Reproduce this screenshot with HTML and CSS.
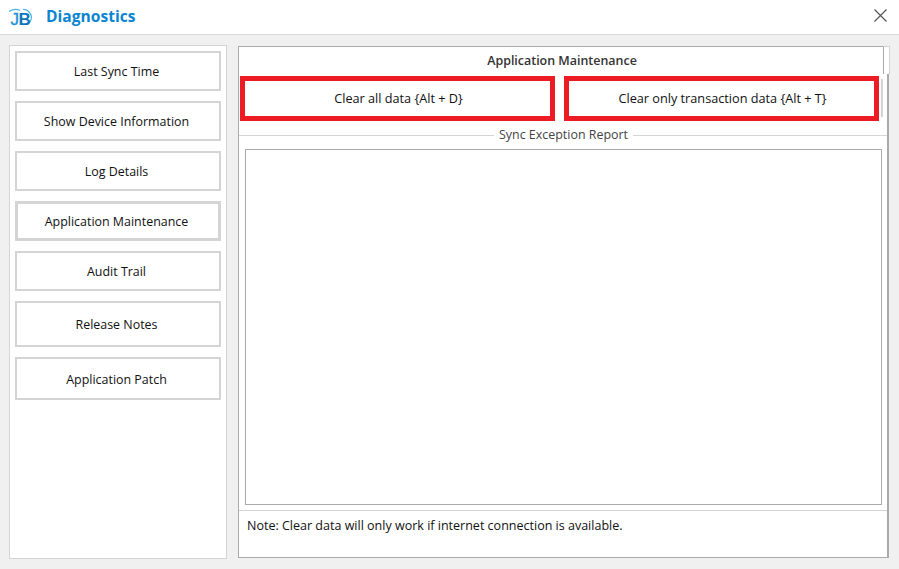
FILE: index.html
```html
<!DOCTYPE html>
<html lang="en">
<head>
<meta charset="utf-8">
<title>Diagnostics</title>
<link rel="stylesheet" href="styles.css">
</head>
<body>
<header class="titlebar">
  <svg class="logo" viewBox="0 0 26 20" width="26" height="20" aria-hidden="true">
    <path class="logo-swoosh" d="M1 3.500C5 1 9 1 12 2.500"/>
    <path class="logo-swoosh" d="M15 1.500C19 1 23 5 23.500 9C23.500 12 21.500 14.500 19.500 16"/>
    <text class="logo-j" x="2.500" y="17">J</text>
    <text class="logo-b" x="10.500" y="17">B</text>
  </svg>
  <h1 class="title">Diagnostics</h1>
  <button class="close" aria-label="Close">
    <svg viewBox="0 0 13 13" width="13" height="13" aria-hidden="true"><path d="M.5.5l12 12M12.500.5l-12 12"/></svg>
  </button>
</header>
<div class="content">
  <nav class="sidebar">
    <button class="nav-btn">Last Sync Time</button>
    <button class="nav-btn">Show Device Information</button>
    <button class="nav-btn">Log Details</button>
    <button class="nav-btn active">Application Maintenance</button>
    <button class="nav-btn">Audit Trail</button>
    <button class="nav-btn tall">Release Notes</button>
    <button class="nav-btn mid">Application Patch</button>
  </nav>
  <main class="panel">
    <h2 class="panel-title">Application Maintenance</h2>
    <div class="actions">
      <button class="action">Clear all data {Alt + D}</button>
      <button class="action last">Clear only transaction data {Alt + T}</button>
    </div>
    <fieldset class="report">
      <legend class="report-legend">Sync Exception Report</legend>
      <div class="report-box"></div>
    </fieldset>
    <p class="note">Note: Clear data will only work if internet connection is available.</p>
  </main>
</div>
</body>
</html>
```
FILE: styles.css
```css
* { box-sizing: border-box; }
html, body { height: 100%; }
body {
  margin: 0;
  height: 569px;
  overflow: hidden;
  background: #f0f0f0;
  color: #111;
  font-family: "Open Sans", "Noto Sans", sans-serif;
  font-size: 12.450px;
  display: flex;
  flex-direction: column;
}
.titlebar {
  height: 35px;
  flex: none;
  background: #fff;
  border-bottom: 1px solid #d9d9d9;
  display: flex;
  align-items: center;
  padding: 0 12px 0 8px;
}
.logo { flex: none; margin-top: 1px; }
.logo-swoosh { fill: none; stroke: #4db4e6; stroke-width: 1.200; }
.logo-j, .logo-b { font-family: "Liberation Sans", sans-serif; font-size: 17px; }
.logo-j { fill: #1c93d8; stroke: #1c93d8; stroke-width: .4; }
.logo-b { fill: #0f76bd; font-weight: 700; }
.title {
  margin: 0 0 2px 12px;
  font-size: 15.600px;
  font-weight: 700;
  color: #0a85d1;
  flex: 1;
}
.close {
  width: 13px;
  height: 13px;
  padding: 0;
  border: 0;
  background: none;
  display: flex;
  margin-bottom: 4px;
}
.close path { stroke: #555; stroke-width: 1.200; fill: none; }
.content {
  flex: 1;
  display: flex;
  gap: 11px;
  padding: 10px 10px 10px 9px;
  min-height: 0;
}
.sidebar {
  width: 218px;
  flex: none;
  background: #fff;
  border: 1px solid #d4d4d4;
  padding: 5px;
  display: flex;
  flex-direction: column;
  gap: 10px;
}
.nav-btn {
  height: 40px;
  flex: none;
  background: #fff;
  border: 2px solid #d4d4d4;
  font: inherit;
  color: #111;
  padding: 0 3px 0 0;
}
.nav-btn.active { border-width: 3px; }
.nav-btn.tall { height: 46px; }
.nav-btn.mid { height: 43px; padding-top: 1px; }
.panel {
  flex: 1;
  min-width: 0;
  background: #fff;
  border: 1px solid #aaa;
  border-right-width: 2px;
  margin-top: 1px;
  margin-bottom: 1px;
  display: flex;
  flex-direction: column;
  position: relative;
}
.panel::before {
  content: "";
  position: absolute;
  top: -1px;
  right: -3px;
  width: 5px;
  height: 27px;
  background: #fff;
  border-top: 1px solid #d4d4d4;
  border-left: 1px solid #aaa;
  border-right: 1px solid #d4d4d4;
}
.panel-title {
  margin: 0;
  height: 29px;
  flex: none;
  font-size: 12.450px;
  font-weight: 600;
  color: #333;
  text-align: center;
  line-height: 27px;
  padding-right: 2px;
}
.actions {
  display: flex;
  gap: 9px;
  padding-left: 1px;
  padding-right: 8px;
  flex: none;
}
.action {
  flex: 1;
  height: 45px;
  background: #fff;
  border: 5px solid #ed1c24;
  font: inherit;
  font-size: 12.700px;
  color: #111;
  padding: 0 0 2px 2px;
}
.action.last { position: relative; }
.action.last::after {
  content: "";
  position: absolute;
  top: -2px;
  bottom: -1px;
  right: -9px;
  width: 4px;
  border-right: 2px solid #d4d4d4;
}
.report {
  margin: 5px 0 0;
  padding: 5px 5px 4px 6px;
  border: 1px solid #d4d4d4;
  border-width: 1px 0 1px 0;
  flex: none;
  height: 385px;
}
.report-legend {
  padding: 0 5px;
  margin: 0 auto;
  color: #444;
  line-height: 18px;
}
.report-box {
  height: 356px;
  border: 1px solid #aaa;
  background: #fff;
}
.note {
  margin: 6px 0 0 8px;
  font-size: 12.520px;
  line-height: 17px;
}
```
